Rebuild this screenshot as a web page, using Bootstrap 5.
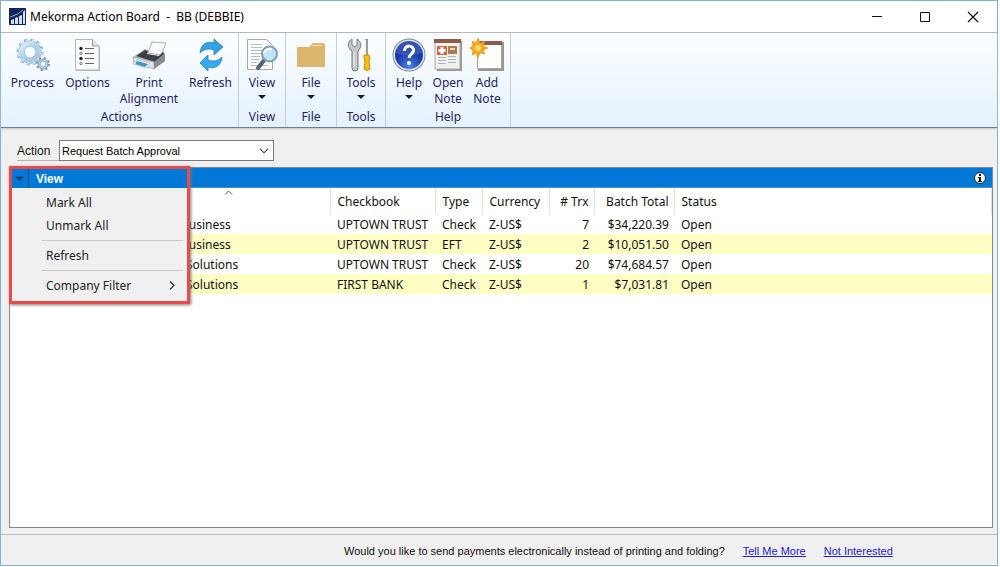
<!DOCTYPE html>
<html lang="en">
<head>
<meta charset="utf-8">
<meta name="viewport" content="width=device-width, initial-scale=1">
<title>Mekorma Action Board</title>
<link href="https://cdn.jsdelivr.net/npm/bootstrap@5.3.0/dist/css/bootstrap.min.css" rel="stylesheet">
<style>
body{font-family:"Noto Sans","Open Sans",sans-serif;font-size:12px;line-height:16px;color:#111;background:#fff;padding:0 2px 1px 0}
.app-window{min-height:calc(100vh - 1px);border:1px solid #7db2da;background:#f0f0f0}
.title-bar{height:32px;background:#fff;border-bottom:1px solid #b4b8c4;padding-left:8px;color:#000}
.title-bar h1{font-size:12px;line-height:16px;font-weight:400;white-space:pre}
.win-btn{width:48px;height:31px;border:0;background:none;padding:0}
.ribbon{height:95px;background:linear-gradient(#fcfeff,#eff7ff 55%,#e4f1fe);border-bottom:1px solid #6c7f94;box-shadow:0 1px 2px #c4c8cc;color:#1c2564}
.ribbon-group{border-right:1px solid #c5cedb;padding:5px 2px 1px}
.ribbon-group:first-child{padding-left:4px;padding-right:0}
.tool-btn{display:flex;flex-direction:column;align-items:center;justify-content:flex-start;border:0;background:none;padding:0;color:inherit;height:71px;line-height:16px}
.tool-btn svg{display:block;flex:none;margin:0 auto 3px}
.tool-btn .caret{margin:4px auto 0}
.w-s{width:36px}.w-m{width:42px}.w-t{width:44px}.w-f{width:46px}.w-l{width:55px}.w-xl{width:68px}
.ui-sans,.ui-sans select{font-family:"Liberation Sans",Arial,sans-serif}
.action-row{padding:12px 0 6px 16px}
.action-row label{width:42px;border-bottom:1px solid #b5b5b5;line-height:22px;height:21px}
.action-select{width:215px;height:21px;border:1px solid #7a7a7a;border-radius:0;padding:0 22px 0 2px;font-size:11px;line-height:18px;color:#000;background-color:#fff;background-size:10px 6px;background-position:right 4px center;background-image:url("data:image/svg+xml,%3Csvg xmlns='http://www.w3.org/2000/svg' viewBox='0 0 10 6'%3E%3Cpath d='M1 .8l4 4 4-4' fill='none' stroke='%23444' stroke-width='1.1'/%3E%3C/svg%3E")}
.board{margin:0 4px 0 8px;border:1px solid #858585;background:#fff}
.board-bar{height:20px;background:#0078d7;border-bottom:1px solid #4b8fc4;padding-right:6px}
.batches{table-layout:fixed;width:100%;border-collapse:collapse;white-space:nowrap}
.batches th{font-weight:400;height:26px;padding:1px 7px 0;border-right:1px solid #e2e2e2;position:relative}
.batches td{height:20px;padding:1px 7px 0;line-height:16px}
.batches th.num,.batches td.num{text-align:right;padding-left:0;padding-right:5px}
.batches th:last-child,.batches td:last-child,.batches th:nth-child(3),.batches td:nth-child(3){padding-right:0}
.batches tbody tr:nth-child(even){background:#ffffc4}
.sort-mark{position:absolute;top:2px;left:214px}
.batches .co-b{padding-left:171px}.batches .co-s{padding-left:176px}
.view-menu{position:absolute;left:-1px;top:-2px;width:181px;border:3px solid #e94b4b;background:#f0f0f0;box-shadow:1px 1px 3px #777;z-index:2}
.menu-head{height:19px;background:#0078d7;color:#fff;font-weight:700;border:0;padding:0;width:100%;line-height:16px}
.menu-head svg{width:17px;height:19px;border-right:1px solid #16507f;margin-right:7px}
.menu-list{padding:3px 0 4px}
.menu-item{display:flex;width:100%;border:0;background:none;padding:0 12px 0 34px;height:23px;align-items:center;color:#222}
.menu-rule{border-top:1px solid #c9c9c9;margin:3px 4px 3px 30px}
.promo{height:31px;border-top:1px solid #bcbcbc;margin-top:6px;padding:1px 0 0 343px;font-size:11px;white-space:nowrap;color:#111}
.promo a{color:#2020d0;margin-left:18px}
</style>
<script src="https://cdn.jsdelivr.net/npm/bootstrap@5.3.0/dist/js/bootstrap.bundle.min.js"></script>
</head>
<body>
<div class="app-window d-flex flex-column">
<header class="title-bar d-flex align-items-center">
<svg width="17" height="17" viewBox="0 0 17 17"><path fill="#10275c" d="M0 0h17v17H0z"/><path fill="#cfe0f2" d="M2 12l3-1v5H2zm4-2l3-1v7H6zm4-2l3-1v9h-3zm4-4l2-2v14h-2z"/><path d="M1 9Q9 7 14 2" stroke="#8aa8d4" fill="none"/></svg>
<h1 class="mb-0 ms-1 me-auto">Mekorma Action Board  -  BB (DEBBIE)</h1>
<button class="win-btn" aria-label="Minimize"><svg width="12" height="12"><path d="M1 5.500h10" stroke="#111"/></svg></button>
<button class="win-btn" aria-label="Maximize"><svg width="12" height="12"><path d="M1.500 1.500h9v9h-9z" stroke="#111" fill="none"/></svg></button>
<button class="win-btn" aria-label="Close"><svg width="12" height="12"><path d="M1 1l10 10M11 1L1 11" stroke="#111" stroke-width="1.200"/></svg></button>
</header>

<nav class="ribbon d-flex text-center">
<div class="ribbon-group">
<div class="d-flex align-items-start">
<button class="tool-btn w-l"><svg width="34" height="34" viewBox="0 0 34 34"><defs><linearGradient id="gr" x2="1" y2="1"><stop stop-color="#e2edf7"/><stop offset=".5" stop-color="#a4d3ec"/><stop offset="1" stop-color="#b5c5d8"/></linearGradient></defs><circle cx="14" cy="14" r="11.500" fill="none" stroke="#8fb0cc" stroke-width="4" stroke-dasharray="3 3.020"/><circle cx="14" cy="14" r="8.500" fill="none" stroke="#8fabc4" stroke-width="6"/><circle cx="14" cy="14" r="8.500" fill="none" stroke="url(#gr)" stroke-width="5"/><circle cx="14" cy="14" r="11.300" fill="none" stroke="#c6e1f2" stroke-width="3" stroke-dasharray="2 4.020" stroke-dashoffset="-.5"/><circle cx="27" cy="26" r="5.500" fill="none" stroke="#7c95b2" stroke-width="3" stroke-dasharray="2 2.320"/><circle cx="27" cy="26" r="4" fill="#e9f5fc" stroke="#8eadc8" stroke-width="3"/><circle cx="27" cy="26" r="4" fill="none" stroke="#bcd6e8"/></svg>Process</button>
<button class="tool-btn w-l"><svg width="34" height="34" viewBox="0 0 34 34"><path d="M5 2h17l7 7v24H5z" fill="#aaa"/><path d="M4.500 1.500h17l6.500 6.500v24H4.500z" fill="#fafafa" stroke="#b8b8b8"/><path d="M21.500 1.500V8H28" fill="#e3e3e3" stroke="#999"/><path d="M14 10.500h9M14 15.500h9M14 20.500h9M14 25.500h9" stroke="#666"/><circle cx="10" cy="10.500" r="1.700" fill="#222"/><circle cx="10" cy="15.500" r="1.200" fill="none" stroke="#777"/><circle cx="10" cy="20.500" r="1.700" fill="#222"/><circle cx="10" cy="25.500" r="1.200" fill="none" stroke="#777"/></svg>Options</button>
<button class="tool-btn w-xl"><svg width="34" height="34" viewBox="0 0 34 34"><path d="M16 15l4-11 14 1-5 12z" fill="#fbfbfb" stroke="#999" stroke-width=".8"/><path d="M1 19l12-8 3 1-1 4 12 2 4-5 2 2v8l-11 8-20-6z" fill="#b9bdc2"/><path d="M4 18l9-6 3 1-1 3 12 2 4-4 1 2-9 8z" fill="#3d4145"/><path d="M1 19l21 5v7L2 25z" fill="#e3e5e8" stroke="#999" stroke-width=".7"/><path d="M22 24l11-8v7l-11 8z" fill="#858a90"/><path d="M5 22l13 3-4 5-13-4z" fill="#fff" stroke="#aaa" stroke-width=".6"/><path d="M5 23l11 3-3 3-10-3z" fill="#3c96c8"/></svg><span>Print<br>Alignment</span></button>
<button class="tool-btn w-l"><svg width="34" height="34" viewBox="0 0 34 34"><path d="M6 15C7 5 14 3 20 5V1l9 8-9 8v-5c-6-2-10-1-14 3z" fill="#31a3e9" stroke="#2580bd" stroke-width=".8"/><path d="M28 19c-1 10-8 12-14 10v4l-8-8 8-8v5c6 2 10 1 14-3z" fill="#36aaf0" stroke="#2580bd" stroke-width=".8"/></svg>Refresh</button>
</div>Actions</div>
<div class="ribbon-group">
<button class="tool-btn w-m"><svg width="34" height="34" viewBox="0 0 34 34"><path d="M2.500 1.500h19l6 6v24h-25z" fill="#fafafa" stroke="#aaa"/><path d="M6 6.500h11M6 9.500h11M6 12.500h11M6 15.500h11M6 18.500h9M6 21.500h8M6 24.500h6M6 27.500h17" stroke="#bbb"/><path d="M20 21l-7 9" stroke="#59626e" stroke-width="4" stroke-linecap="round"/><circle cx="24.500" cy="16" r="7.500" fill="#bfe3f6" fill-opacity=".9" stroke="#7e9fb8" stroke-width="2"/><path d="M19 15q2-5 8-4" stroke="#fff" stroke-width="2" fill="none"/></svg>View<svg class="caret" width="8" height="4"><path d="M0 0h8L4 4z" fill="#101a50"/></svg></button>View</div>
<div class="ribbon-group">
<button class="tool-btn w-f"><svg width="34" height="34" viewBox="0 0 34 34"><path d="M3 9h12l4-4h11l1 2v22H3z" fill="#dcb56f"/><path d="M18 8l1-1h9v1z" fill="#f4e2b8"/></svg>File<svg class="caret" width="8" height="4"><path d="M0 0h8L4 4z" fill="#101a50"/></svg></button>File</div>
<div class="ribbon-group">
<button class="tool-btn w-t"><svg width="34" height="34" viewBox="0 0 34 34"><path d="M8 1c-4 2-5 7-2 10l2 2v17q0 3 3 3t3-3V13l2-3c2-4 0-7-3-9v6l-2 2-3-2z" fill="#c5c9cc" stroke="#777"/><path d="M10 14v15" stroke="#f5f5f5"/><path d="M22.500 1v17" stroke="#989da2" stroke-width="3"/><path d="M21.500 2v15" stroke="#eee"/><path d="M20 17h5l1 3-1 4 1 7q-3 3-6 0l1-7-1-4z" fill="#f6bd1c" stroke="#cc8c0b"/></svg>Tools<svg class="caret" width="8" height="4"><path d="M0 0h8L4 4z" fill="#101a50"/></svg></button>Tools</div>
<div class="ribbon-group">
<div class="d-flex align-items-start">
<button class="tool-btn w-m"><svg width="34" height="34" viewBox="0 0 34 34"><defs><radialGradient id="hg" cx=".5" cy=".9"><stop stop-color="#4c82e8"/><stop offset="1" stop-color="#183aa8"/></radialGradient></defs><circle cx="17" cy="17" r="16.500" fill="#7e858e"/><circle cx="17" cy="17" r="15.600" fill="#e2e6ea"/><circle cx="17" cy="17" r="14" fill="url(#hg)"/><path d="M4 15a13 13 0 0 1 26 0q-13 5-26 0z" fill="#fff" opacity=".13"/><path d="M12.500 13c0-7 10-6 9 0-.5 3-4.500 3-4.500 7" fill="none" stroke="#fff" stroke-width="3"/><circle cx="17" cy="25" r="2" fill="#fff"/></svg>Help<svg class="caret" width="8" height="4"><path d="M0 0h8L4 4z" fill="#101a50"/></svg></button>
<button class="tool-btn w-s"><svg width="34" height="34" viewBox="0 0 34 34"><path d="M5 3h26v30H6z" fill="#9b9995"/><path d="M4 2h25v29H4z" fill="#f2f0eb" stroke="#aaa"/><path d="M3 1h27v4H3z" fill="#91594a"/><path d="M6 8h10v9H6z" fill="#de6340"/><path d="M11 9v7M7.500 12.500h7" stroke="#fff" stroke-width="3"/><path d="M17 8h9v8h-9z" fill="#a57c54"/><path d="M19 11h5" stroke="#e8d3b6" stroke-width="2"/><path d="M7 19.500h8M7 22.500h8M7 25.500h8M17 18.500h8M17 21.500h8M17 24.500h8" stroke="#a9b7c3"/></svg><span>Open<br>Note</span></button>
<button class="tool-btn w-m"><svg width="34" height="34" viewBox="0 0 34 34"><path d="M9 4h25v29H8z" fill="#999791"/><path d="M7.500 3.500h24v27h-24z" fill="#fdfdfc" stroke="#aaa69f"/><path d="M8 3h24v4H8z" fill="#91594a"/><path d="M8 0l2 5 5-2-2 5 5 2-5 2 2 4-5-1-2 5-2-5-4 2 1-5-4-2 4-2-1-5 4 2z" fill="#f6a81e" stroke="#df8d13" stroke-width=".6"/><circle cx="8" cy="10" r="3" fill="#ffda65"/></svg><span>Add<br>Note</span></button>
</div>Help</div>
</nav>

<main class="d-flex flex-column flex-grow-1">
<div class="action-row ui-sans d-flex"><label for="action">Action</label>
<select id="action" class="form-select action-select"><option>Request Batch Approval</option></select></div>
<section class="board position-relative flex-grow-1">
<div class="board-bar d-flex align-items-center justify-content-end"><svg width="12" height="12" viewBox="0 0 12 12"><circle cx="6" cy="6" r="5.500" fill="#fff" stroke="#222"/><path d="M5 2h2v2H5zM4 5h3v4h1v1H4V9h1V6H4z" fill="#111"/></svg></div>
<div class="view-menu">
<button class="menu-head ui-sans d-flex align-items-center"><svg viewBox="0 0 17 18"><path d="M3 7h10l-5 5z" fill="#1f4668"/></svg>View</button>
<div class="menu-list">
<button class="menu-item">Mark All</button>
<button class="menu-item">Unmark All</button>
<div class="menu-rule"></div>
<button class="menu-item">Refresh</button>
<div class="menu-rule"></div>
<button class="menu-item justify-content-between">Company Filter<svg width="6" height="9"><path d="M1 .5l4 4-4 4" fill="none" stroke="#333" stroke-width="1.200"/></svg></button>
</div></div>
<table class="batches">
<colgroup><col style="width:320px"><col style="width:105px"><col style="width:47px"><col style="width:67px"><col style="width:45px"><col style="width:80px"><col></colgroup>
<thead><tr><th><svg class="sort-mark" width="9" height="5"><path d="M1 4.500l3.500-3.500L8 4.500" fill="none" stroke="#555"/></svg></th><th>Checkbook</th><th>Type</th><th>Currency</th><th class="num">#&nbsp;Trx</th><th class="num">Batch Total</th><th>Status</th></tr></thead>
<tbody>
<tr><td class="co-b">Business</td><td>UPTOWN TRUST</td><td>Check</td><td>Z-US$</td><td class="num">7</td><td class="num">$34,220.39</td><td>Open</td></tr>
<tr><td class="co-b">Business</td><td>UPTOWN TRUST</td><td>EFT</td><td>Z-US$</td><td class="num">2</td><td class="num">$10,051.50</td><td>Open</td></tr>
<tr><td class="co-s">Solutions</td><td>UPTOWN TRUST</td><td>Check</td><td>Z-US$</td><td class="num">20</td><td class="num">$74,684.57</td><td>Open</td></tr>
<tr><td class="co-s">Solutions</td><td>FIRST BANK</td><td>Check</td><td>Z-US$</td><td class="num">1</td><td class="num">$7,031.81</td><td>Open</td></tr>
</tbody></table>
</section>
<footer class="promo ui-sans d-flex align-items-center"><span>Would you like to send payments electronically instead of printing and folding?</span><a href="#more">Tell Me More</a><a href="#dismiss">Not Interested</a></footer>
</main>
</div>
</body>
</html>
